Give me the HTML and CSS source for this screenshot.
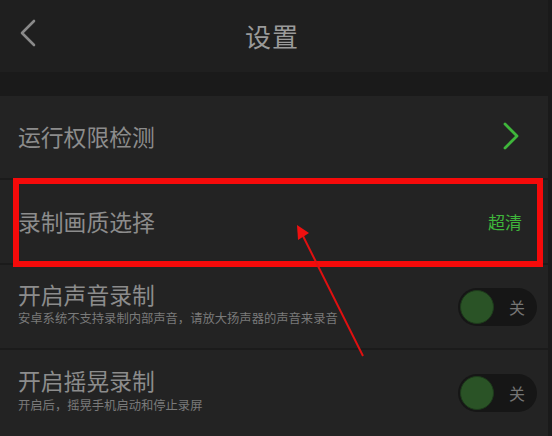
FILE: index.html
```html
<!DOCTYPE html>
<html lang="zh-CN">
<head>
  <meta charset="UTF-8" />
  <meta name="viewport" content="width=device-width, initial-scale=1.0" />
  <title>设置</title>
  <link rel="stylesheet" href="styles.css">
</head>
<body>
  <div class="screen">
    <header class="topbar">
      <svg class="back" width="20" height="30" viewBox="0 0 20 30">
        <polyline points="16,2 4,14 16,26" fill="none" stroke="#8a8a8a" stroke-width="2.6" stroke-linecap="round" stroke-linejoin="round"/>
      </svg>
      <h1>设置</h1>
    </header>
    <div class="spacer"></div>

    <ul class="list">
      <li class="row">
        <span class="label">运行权限检测</span>
        <svg class="chev" width="20" height="30" viewBox="0 0 20 30">
          <polyline points="4,2 16,14 4,26" fill="none" stroke="#3fb63b" stroke-width="2.8" stroke-linecap="round" stroke-linejoin="round"/>
        </svg>
      </li>
      <li class="row">
        <span class="label">录制画质选择</span>
        <span class="value">超清</span>
      </li>
      <li class="row">
        <div class="text">
          <span class="label">开启声音录制</span>
          <span class="hint">安卓系统不支持录制内部声音，请放大扬声器的声音来录音</span>
        </div>
        <div class="switch"><span class="knob"></span><span class="state">关</span></div>
      </li>
      <li class="row">
        <div class="text">
          <span class="label">开启摇晃录制</span>
          <span class="hint">开启后，摇晃手机启动和停止录屏</span>
        </div>
        <div class="switch"><span class="knob"></span><span class="state">关</span></div>
      </li>
    </ul>

    <!-- annotation overlay -->
    <div class="mark-box"></div>
    <svg class="mark-arrow" width="552" height="436" viewBox="0 0 552 436">
      <line x1="363" y1="356" x2="303" y2="236" stroke="#e01010" stroke-width="2"/>
      <polygon points="297,225 309,233 298,240" fill="#f01010"/>
    </svg>
  </div>
</body>
</html>
```

FILE: styles.css
```css
* { box-sizing: border-box; }
html, body { margin: 0; padding: 0; }
body { background: #1a1a1a; font-family: "Noto Sans CJK SC", "Noto Sans", sans-serif; width: 552px; height: 436px; overflow: hidden; }
.screen { position: relative; width: 552px; height: 436px; }

.topbar { height: 72px; width: 548px; background: #1f1f1f; display: flex; align-items: center; justify-content: center; position: relative; }
.topbar h1 { margin: 0 0 0 -4px; font-size: 26px; font-weight: 400; color: #9a9a9a; letter-spacing: 1px; line-height: 1; }
.back { position: absolute; left: 18px; top: 19px; }

.spacer { height: 24px; width: 548px; background: #1a1a1a; }

.list { list-style: none; margin: 0; padding: 0; width: 548px; }
.row { display: flex; align-items: center; justify-content: space-between; background: #232323; padding: 0 11px 0 18px; border-bottom: 2px solid #1b1b1b; }
.row:nth-child(1) { height: 84px; }
.row:nth-child(2) { height: 85px; }
.row:nth-child(3) { height: 85px; }
.row:nth-child(4) { height: 86px; border-bottom: none; }

.label { font-size: 22.8px; color: #8c8c8c; line-height: 1.2; }
.value { font-size: 17px; color: #3fb63b; margin-right: 15px; }
.chev { margin-right: 16px; }

.text { display: flex; flex-direction: column; gap: 2px; margin-top: -6px; }
.hint { font-size: 12.3px; color: #7a7a7a; line-height: 1.3; }

.switch { width: 79px; height: 38px; border-radius: 19px; background: #161616; display: flex; align-items: center; justify-content: space-between; padding: 0 12px 0 2px; }
.knob { width: 34px; height: 34px; border-radius: 50%; background: #2a5326; border: 1px solid #1d3a1b; }
.state { font-size: 16px; color: #747474; }

.mark-box { position: absolute; left: 13px; top: 178px; width: 530px; height: 89px; border: 6px solid #f50a0a; }
.mark-arrow { position: absolute; left: 0; top: 0; }
```
